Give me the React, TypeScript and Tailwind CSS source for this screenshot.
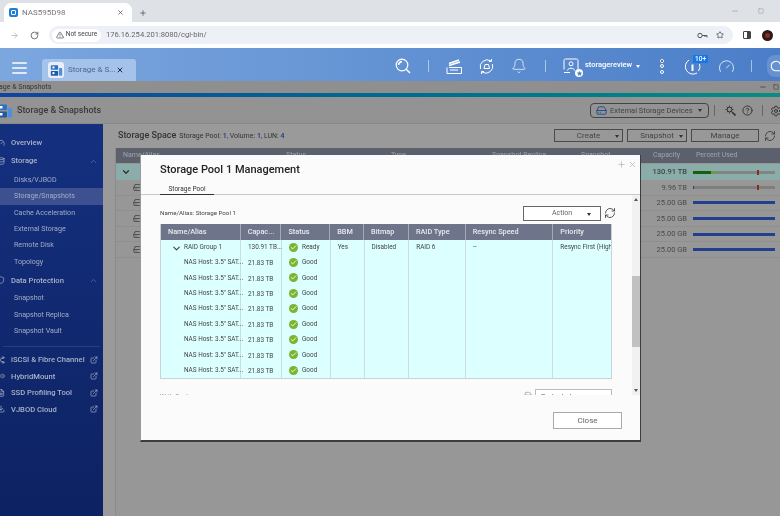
import React from "react";
import { ArrowRight, RotateCw, TriangleAlert, Star, X, Plus, Minus, Square, Bell, ChevronUp, ChevronDown, ExternalLink, RefreshCw, Gauge, Cloud, Check, Database, HardDrive, Shield, Share2, Link2, FileText, Download, HelpCircle, Settings } from "lucide-react";

const font = "[font-family:Roboto,'Liberation_Sans',sans-serif]";

function Sep() {
  return <div className="w-px h-[12px] bg-white/50" />;
}

function Caret({ c = "border-t-[#333]" }: { c?: string }) {
  return <span className={`block w-0 h-0 border-x-[2px] border-x-transparent border-t-[3px] ${c}`} />;
}

function AppIcon({ size }: { size: number }) {
  return (
    <svg width={size} height={size} viewBox="0 0 16 16" className="shrink-0">
      <rect x="1" y="1.5" width="9" height="5.5" rx="1" fill="#2c6fc4" />
      <rect x="1" y="8.5" width="9" height="6" rx="1" fill="#1f5aa8" />
      <rect x="11" y="5" width="4" height="9.5" rx="1" fill="#4d8fdc" />
      <rect x="3" y="3" width="2.5" height="2.5" fill="#fff" />
      <rect x="3" y="10" width="2.5" height="2.5" fill="#fff" />
    </svg>
  );
}

function Chrome() {
  return (
    <div className="shrink-0">
      <div className="h-[22px] bg-[#dee1e6] flex items-end relative">
        <div className="ml-[4px] w-[128px] h-[19px] bg-white rounded-t-[7px] flex items-center pl-[5px] pr-[6px]">
          <div className="w-[9px] h-[9px] rounded-[2px] bg-[#1f7fd6] flex items-center justify-center">
            <div className="w-[5px] h-[5px] border border-white rounded-[1px]" />
          </div>
          <span className="ml-[4px] text-[8px] text-[#777] flex-1">NAS595D98</span>
          <X size={7} strokeWidth={2.4} className="text-[#444] -translate-x-[2px]" />
        </div>
        <Plus size={8} strokeWidth={2} className="ml-[7px] mb-[5px] text-[#444]" />
        <div className="ml-auto flex items-center gap-[19px] mr-[16px] mb-[7px]">
          <Minus size={8} className="text-[#999]" />
          <Square size={6} className="text-[#999]" />
        </div>
      </div>
      <div className="h-[26px] bg-white flex items-center">
        <ArrowRight size={9} className="ml-[10px] text-[#b0b0b0]" />
        <RotateCw size={9} strokeWidth={2.2} className="ml-[11px] text-[#555]" />
        <div className="ml-[10px] w-[684px] h-[18px] rounded-full bg-[#edf0f6] flex items-center pl-[3px] pr-[9px]">
          <div className="h-[13px] w-[49px] rounded-full bg-white flex items-center justify-center gap-[2px]">
            <TriangleAlert size={8} className="text-[#444]" />
            <span className="text-[6.5px] text-[#444]">Not secure</span>
          </div>
          <span className="ml-[5px] text-[7.6px] text-[#666]">176.16.254.201:8080/cgi-bin/</span>
          <svg width="11" height="7" viewBox="0 0 11 7" className="ml-auto text-[#555]" fill="none" stroke="currentColor" strokeWidth="1">
            <circle cx="3" cy="3.5" r="2.2" />
            <path d="M5.2 3.5H10V5.5M8 3.5V5" />
          </svg>
          <Star size={8} strokeWidth={2.2} className="ml-[8px] text-[#444]" />
        </div>
        <div className="ml-[10px] w-[8px] h-[8px] border border-[#444] rounded-[1px] flex justify-end">
          <div className="w-[3px] bg-[#444]" />
        </div>
        <div className="ml-[11px] w-[11px] h-[11px] rounded-full bg-[#2a1a1a] flex items-center justify-center">
          <div className="w-[5px] h-[5px] rounded-full bg-[#8e2a20]" />
        </div>
      </div>
    </div>
  );
}

function QtsHeader() {
  return (
    <div className="h-[33px] shrink-0 bg-gradient-to-r from-[#7ca7df] to-[#4b7ec8] flex items-end relative overflow-hidden">
      <div className="ml-[12px] mb-[7px] w-[15px] shrink-0 flex flex-col gap-[3px] self-end">
        <div className="h-[2px] rounded bg-white/75" />
        <div className="h-[2px] rounded bg-white/75" />
        <div className="h-[2px] rounded bg-white/75" />
      </div>
      <div className="ml-[15px] w-[94px] h-[22px] shrink-0 rounded-t-[3px] bg-[#a4c2ea] flex items-center pl-[6px]">
        <div className="w-[16px] h-[16px] rounded-[3px] bg-[#e8eef8] flex items-center justify-center">
          <AppIcon size={13} />
        </div>
        <span className="ml-[4px] text-[8px] text-[#4a6a95] w-[46px] whitespace-nowrap">Storage &amp; S...</span>
        <X size={8} strokeWidth={3} className="ml-[2px] text-[#1c2a40]" />
      </div>
      <div className="self-center flex items-center text-white ml-[259px] mt-[3px] shrink-0">
        <svg width="16" height="16" viewBox="0 0 16 16" fill="none" stroke="currentColor" strokeWidth="1.2">
          <circle cx="7" cy="7" r="5.8" />
          <path d="M3.6 7A3.4 3.4 0 0 1 7 3.6" strokeWidth="1.6" />
          <path d="M11.2 11.2L15 15" strokeWidth="1.5" />
        </svg>
        <div className="ml-[17px]"><Sep /></div>
        <svg className="ml-[17px]" width="16" height="15" viewBox="0 0 16 15" fill="none" stroke="currentColor" strokeWidth="1">
          <path d="M1 8.5V14.5H15.5V8.5" />
          <path d="M3 8.5H15.5M4 11H12" />
          <path d="M3 6.5L14 3M3 4.5L13 1" strokeWidth="1.6" />
        </svg>
        <svg className="ml-[16px]" width="17" height="17" viewBox="0 0 17 17" fill="none" stroke="currentColor" strokeWidth="1">
          <path d="M2.5 11A7 7 0 0 1 13 3" />
          <path d="M14.5 6A7 7 0 0 1 4 14" />
          <path d="M13.5 1V3.5H11M3.5 16V13.5H6" />
          <path d="M6 10.5L7 6.5H10.5L11.5 10.5Z" />
        </svg>
        <Bell size={16} strokeWidth={1.1} className="ml-[16px]" />
        <div className="ml-[18px]"><Sep /></div>
        <div className="relative ml-[17px]">
          <svg width="16" height="16" viewBox="0 0 16 16" fill="none" stroke="currentColor" strokeWidth="1">
            <path d="M1 11.5V2.5a1.5 1.5 0 0 1 1.5-1.5h11A1.5 1.5 0 0 1 15 2.5v9" />
            <circle cx="8" cy="5.8" r="2" />
            <path d="M4.5 12.5C4.8 9.5 11.2 9.5 11.5 12.5" />
            <path d="M1 14.5H7" />
          </svg>
          <div className="absolute -right-[4px] -bottom-[3px] w-[8px] h-[8px] rounded-full bg-white flex items-center justify-center">
            <Star size={5} className="text-[#4b7ec8]" fill="#4b7ec8" />
          </div>
        </div>
        <span className="ml-[6px] text-[7.5px] font-medium w-[50px] -mt-[2px] whitespace-nowrap">storagereview</span>
        <span className="ml-[1px] block w-0 h-0 border-x-[2px] border-x-transparent border-t-[3px] border-t-white" />
        <div className="ml-[20px] flex flex-col gap-[1.5px]">
          <div className="w-[4px] h-[4px] rounded-full border border-white bg-[#333]" />
          <div className="w-[4px] h-[4px] rounded-full border border-white" />
          <div className="w-[4px] h-[4px] rounded-full border border-white" />
        </div>
        <div className="relative ml-[20px]">
          <svg width="17" height="17" viewBox="0 0 17 17" fill="none" stroke="currentColor" strokeWidth="1">
            <path d="M5 2A7.5 7.5 0 1 0 13 15" />
            <path d="M15.5 6A7.5 7.5 0 0 1 14.5 13" />
            <path d="M8.5 6.5V13" strokeWidth="2" />
          </svg>
          <span className="absolute -top-[3px] left-[9px] h-[8px] px-[2px] bg-[#1677e8] text-[6.5px] leading-[8px] font-medium">10+</span>
        </div>
        <Gauge size={17} strokeWidth={1.1} className="ml-[17px]" />
        <div className="ml-[16px]"><Sep /></div>
        <div className="ml-[15px] w-[24px] h-[22px] rounded-l-[8px] bg-white/15 flex items-center pl-[3px]">
          <Cloud size={16} strokeWidth={1.6} />
        </div>
      </div>
    </div>
  );
}

type Side = { t: string; icon?: React.ReactNode; right?: "up" | "ext" };

const ic = "text-[#aeb6cd] -ml-[3px]";
const top: Side[] = [
  { t: "Overview", icon: <Gauge size={8} className={ic} /> },
  { t: "Storage", icon: <Database size={8} className={ic} />, right: "up" },
];
const sub1 = ["Disks/VJBOD", "Storage/Snapshots", "Cache Acceleration", "External Storage", "Remote Disk", "Topology"];
const sub2 = ["Snapshot", "Snapshot Replica", "Snapshot Vault"];
const ext: [string, React.ReactNode][] = [
  ["iSCSI & Fibre Channel", <Share2 size={8} className={ic} />],
  ["HybridMount", <Link2 size={8} className={ic} />],
  ["SSD Profiling Tool", <FileText size={8} className={ic} />],
  ["VJBOD Cloud", <Download size={8} className={ic} />],
];

function Heading({ t, icon, right }: { t: string; icon: React.ReactNode; right?: "up" | "ext" }) {
  return (
    <div className="h-[18px] flex items-center text-[7.6px] font-medium text-[#aab2c9]">
      <div className="w-[11px] flex">{icon}</div>
      <span className="flex-1 whitespace-nowrap">{t}</span>
      {right === "up" && <ChevronUp size={9} strokeWidth={1.2} className="mr-[5px] text-[#8c97b8]" />}
    </div>
  );
}

function SubItem({ t, active }: { t: string; active?: boolean }) {
  return (
    <div className={`h-[16.4px] flex items-center pl-[14px] text-[7.1px] text-[#a3acc6] ${active ? "bg-[#3d5191]" : ""}`}>{t}</div>
  );
}

function Sidebar() {
  return (
    <div className="w-[103px] shrink-0 bg-gradient-to-b from-[#14307f] to-[#0d2262] pt-[10px]">
      {top.map((i) => <Heading key={i.t} t={i.t} icon={i.icon} right={i.right} />)}
      <div className="mt-[2px]">
        {sub1.map((s) => <SubItem key={s} t={s} active={s === "Storage/Snapshots"} />)}
      </div>
      <div className="mt-[1px]">
        <Heading t="Data Protection" icon={<Shield size={8} className={ic} />} right="up" />
      </div>
      <div className="mt-[1px]">
        {sub2.map((s) => <SubItem key={s} t={s} />)}
      </div>
      <div className="mt-[6px] mx-[3px] border-t border-[#24407f]" />
      <div className="mt-[5px] flex flex-col">
        {ext.map(([t, icon]) => (
          <div key={t} className="h-[16.5px] flex items-center text-[7.6px] font-medium text-[#aab2c9]">
            <div className="w-[11px] flex">{icon}</div>
            <span className="flex-1 whitespace-nowrap">{t}</span>
            <ExternalLink size={8} className="mr-[5px]" />
          </div>
        ))}
      </div>
    </div>
  );
}

function BgButton({ t, w, caret }: { t: string; w: string; caret?: boolean }) {
  return (
    <div className={`${w} h-[13px] border border-[#4a4a4a] bg-[#989898] flex items-center justify-center relative text-[8px] text-[#444]`}>
      {t}
      {caret && <span className="absolute right-[3px] top-[5px]"><Caret /></span>}
    </div>
  );
}

const bgRows = [
  { c: "9.96 TB", used: 1, mark: true },
  { c: "25.00 GB", used: 100 },
  { c: "25.00 GB", used: 100 },
  { c: "25.00 GB", used: 100 },
  { c: "25.00 GB", used: 100 },
];

function Main() {
  return (
    <div className="flex-1 bg-[#9a9a9a] pl-[12px] flex flex-col min-w-0">
      <div className="h-[24px] shrink-0 flex items-center pl-[3px] pr-[4px]">
        <span className="text-[9px] font-medium text-[#333]">Storage Space</span>
        <span className="ml-[3px] text-[7px] text-[#333]">Storage Pool: <b className="text-[#1c3a7a] font-medium">1</b>, Volume: <b className="text-[#1c3a7a] font-medium">1</b>, LUN: <b className="text-[#1c3a7a] font-medium">4</b></span>
        <div className="ml-auto flex items-center gap-[4px] -mt-[1px]">
          <BgButton t="Create" w="w-[69px]" caret />
          <BgButton t="Snapshot" w="w-[60px]" caret />
          <BgButton t="Manage" w="w-[68px]" />
          <RefreshCw size={12} strokeWidth={1.6} className="ml-[1px] text-[#333] shrink-0" />
        </div>
      </div>
      <div className="flex-1 border-l border-[#8c8c8c] bg-[#979797]">
        <div className="h-[15px] bg-[#5b606c] flex items-center text-[7px] text-[#a0a4ab] relative">
          <span className="ml-[7px] w-[163px]">Name/Alias</span>
          <span className="w-[105px]">Status</span>
          <span className="w-[101px]">Type</span>
          <span className="w-[89px]">Snapshot Replica</span>
          <span className="w-[72px]">Snapshot</span>
          <span className="w-[43px]">Capacity</span>
          <span>Percent Used</span>
        </div>
        <div className="h-[16px] mt-[1px] bg-[#8aadaa] flex items-center pl-[5px]">
          <ChevronDown size={10} strokeWidth={3} className="text-[#333]" />
          <span className="ml-auto text-[7.5px] font-medium text-[#3d4444]">130.91 TB</span>
          <div className="ml-[6px] mr-[5px] w-[82px] h-[3px] bg-[#7f8684] relative">
            <div className="h-full w-[18px] bg-[#14610f]" />
            <div className="absolute left-[18px] top-0 h-full w-[5px] bg-[#6a9a4a]" />
            <div className="absolute right-[16px] -top-[1px] w-[2px] h-[5px] bg-[#8a2b1d]" />
          </div>
        </div>
        {bgRows.map((r, i) => (
          <div key={i} className="h-[15.6px] flex items-center pl-[17px] border-b border-[#8f8f8f]">
            <HardDrive size={9} className="text-[#3f3f3f]" />
            <span className="ml-auto text-[7.5px] text-[#4a4a4a]">{r.c}</span>
            <div className="ml-[6px] mr-[5px] w-[82px] h-[3px] bg-[#7f7f7f] relative">
              <div className="h-full bg-[#23408f]" style={{ width: `${r.used}%` }} />
              {r.mark && <div className="absolute right-[16px] -top-[1px] w-[2px] h-[5px] bg-[#8a2b1d]" />}
            </div>
          </div>
        ))}
      </div>
    </div>
  );
}

const cols = ["w-[80px]", "w-[41px]", "w-[49px]", "w-[34px]", "w-[45px]", "w-[57px]", "w-[88px]", "w-[58px]"];
const heads = ["Name/Alias", "Capac...", "Status", "BBM", "Bitmap", "RAID Type", "Resync Speed", "Priority"];

function StatusIcon() {
  return (
    <span className="w-[9px] h-[9px] rounded-full bg-[#7ab52e] flex items-center justify-center shrink-0 -mt-[1px]">
      <Check size={7} strokeWidth={3} className="text-white" />
    </span>
  );
}

function Modal() {
  return (
    <div className={`absolute left-[140px] top-[155px] w-[501px] h-[287px] bg-[#fbfbfb] border-b-[2px] border-l border-r-[1px] border-[#3d3d3d] border-l-[#9a9a9a] flex flex-col ${font}`}>
      <div className="absolute right-[3px] top-[5px] flex items-center gap-[2px] text-[#b5b5b5]">
        <Plus size={9} />
        <X size={9} />
      </div>
      <div className="pl-[19px] pt-[7px] h-[40px] border-b border-[#c9c9c9] shrink-0 relative">
        <div className="text-[11px] leading-[16px] font-medium text-[#222]">Storage Pool 1 Management</div>
        <div className="absolute left-[19px] bottom-[-1px] w-[54px] h-[10px] border-b border-[#333] flex items-center justify-center text-[6.5px] text-[#333]">Storage Pool</div>
      </div>
      <div className="h-[200px] shrink-0 overflow-hidden flex">
        <div className="w-[491px] pl-[19px] pr-[20px] shrink-0">
          <div className="h-[29px] flex items-center pt-[7px]">
            <span className="text-[6.2px] text-[#444] pt-[1px]">Name/Alias: Storage Pool 1</span>
            <div className="ml-auto mr-[11px] w-[78px] h-[15px] bg-white border border-[#666] flex items-center justify-center relative text-[7px] text-[#666]">
              Action
              <span className="absolute right-[9px] top-[6px]"><Caret /></span>
            </div>
          </div>
          <div className="relative border border-[#c8d4d4] border-t-0">
            <div className="h-[16px] bg-[#6e7489] flex text-[7.3px] font-medium text-[#e8eaf0]">
              {heads.map((h, i) => (
                <div key={h} className={`${cols[i]} flex items-center pl-[7px] border-r border-[#a5a9b6] last:border-r-0 whitespace-nowrap overflow-hidden`}>{h}</div>
              ))}
            </div>
            <div className="h-[138px] bg-[#dcffff] flex text-[6.4px] text-[#444]">
              <div className={`${cols[0]} border-r border-[#cfdcdc]`}>
                <div className="h-[15.4px] flex items-center pl-[10px] pt-[1px]"><ChevronDown size={11} strokeWidth={2.6} className="text-[#444]" /><span className="ml-[2px]">RAID Group 1</span></div>
                {[1,2,3,4,5,6,7,8].map((i) => <div key={i} className="h-[15.4px] flex items-center pl-[23px] whitespace-nowrap">NAS Host: 3.5" SAT...</div>)}
              </div>
              <div className={`${cols[1]} border-r border-[#cfdcdc]`}>
                <div className="h-[15.4px] flex items-center pl-[7px] pt-[1px] whitespace-nowrap">130.91 TB...</div>
                {[1,2,3,4,5,6,7,8].map((i) => <div key={i} className="h-[15.4px] flex items-center pl-[7px] pt-[2px]">21.83 TB</div>)}
              </div>
              <div className={`${cols[2]} border-r border-[#cfdcdc]`}>
                {["Ready","Good","Good","Good","Good","Good","Good","Good","Good"].map((s, i) => (
                  <div key={i} className="h-[15.4px] flex items-center pl-[7px] gap-[4px]"><StatusIcon /><span>{s}</span></div>
                ))}
              </div>
              <div className={`${cols[3]} border-r border-[#cfdcdc] pl-[7px]`}><div className="h-[15.4px] flex items-center pt-[1px]">Yes</div></div>
              <div className={`${cols[4]} border-r border-[#cfdcdc] pl-[7px]`}><div className="h-[15.4px] flex items-center pt-[1px]">Disabled</div></div>
              <div className={`${cols[5]} border-r border-[#cfdcdc] pl-[7px]`}><div className="h-[15.4px] flex items-center pt-[1px]">RAID 6</div></div>
              <div className={`${cols[6]} border-r border-[#cfdcdc] pl-[7px]`}><div className="h-[15.4px] flex items-center pt-[1px]">--</div></div>
              <div className={`${cols[7]} pl-[7px] overflow-hidden`}><div className="h-[15.4px] flex items-center pt-[1px] whitespace-nowrap">Resync First (High</div></div>
            </div>
          </div>
          <div className="mt-[10px] flex items-start">
            <span className="mt-[4px] text-[6.5px] text-[#888]">WriteCache:</span>
            <HardDrive size={8} className="ml-auto mt-[2px] text-[#999]" />
            <div className="ml-[3px] w-[77px] h-[14px] border border-[#bbb] bg-white pl-[5px] pt-[2px] text-[7px] text-[#666]">Protected</div>
          </div>
        </div>
        <div className="w-[8px] bg-[#f1f1f1] h-full flex flex-col items-center relative shrink-0">
          <span className="mt-[3px] w-0 h-0 border-x-[2px] border-x-transparent border-b-[3px] border-b-[#555]" />
          <div className="absolute top-[81px] w-full h-[71px] bg-[#c1c1c1]" />
          <span className="mt-auto mb-[3px] w-0 h-0 border-x-[2px] border-x-transparent border-t-[3px] border-t-[#555]" />
        </div>
      </div>
      <div className="flex justify-end pr-[18px] pt-[17px]">
        <div className="w-[69px] h-[17px] bg-white border border-[#aaa] flex items-center justify-center text-[8px] text-[#666]">Close</div>
      </div>
      <RefreshCw size={12} strokeWidth={1.6} className="absolute left-[463px] top-[52px] text-[#333]" />
    </div>
  );
}

export default function App() {
  return (
    <div className={`w-[780px] h-[516px] overflow-hidden relative flex flex-col bg-[#9a9a9a] blur-[0.35px] ${font}`}>
      <Chrome />
      <QtsHeader />
      <div className="h-[12px] shrink-0 bg-[#8f8f8f] flex items-center overflow-hidden justify-between">
        <span className="text-[7px] text-[#333] -ml-[1px]">age &amp; Snapshots</span>
        <div className="flex items-center gap-[6px] mr-[1px]">
          <Minus size={8} className="text-[#333]" />
          <Square size={6} className="text-[#333]" />
        </div>
      </div>
      <div className="h-[4px] shrink-0 bg-gradient-to-r from-[#12439c] to-[#0b8d80]" />
      <div className="h-[27px] shrink-0 bg-[#939393] border-b border-[#888] flex items-center overflow-hidden pt-[1px]">
        <div className="-ml-[3px]"><AppIcon size={16} /></div>
        <span className="ml-[4px] text-[9px] font-medium text-[#3a3a3a]">Storage &amp; Snapshots</span>
        <div className="ml-auto h-[15px] w-[119px] shrink-0 rounded-[4px] border border-[#444] flex items-center pl-[5px] text-[7.5px] text-[#444]">
          <HardDrive size={11} className="text-[#1d4a8c]" />
          <span className="ml-[3px] whitespace-nowrap">External Storage Devices</span>
          <span className="ml-[5px]"><Caret /></span>
        </div>
        <div className="ml-[5px] w-px h-[11px] bg-[#666]" />
        <svg className="ml-[10px] text-[#333]" width="11" height="11" viewBox="0 0 11 11" fill="none" stroke="currentColor" strokeWidth="1">
          <circle cx="4.5" cy="4.5" r="2.3" />
          <path d="M4.5 0.5V2M4.5 7V8.5M0.5 4.5H2M7 4.5H8.5M1.7 1.7L2.8 2.8M6.2 6.2L7.3 7.3M7.3 1.7L6.2 2.8M1.7 7.3L2.8 6.2" />
          <path d="M7 7L10.5 10.5" strokeWidth="1.6" />
        </svg>
        <HelpCircle size={11} className="ml-[6px] text-[#333]" />
        <div className="ml-[9px] w-px h-[11px] bg-[#666]" />
        <Settings size={12} className="ml-[7px] -mr-[2px] text-[#333] shrink-0" />
      </div>
      <div className="flex-1 flex min-h-0">
        <Sidebar />
        <Main />
      </div>
      <Modal />
    </div>
  );
}
